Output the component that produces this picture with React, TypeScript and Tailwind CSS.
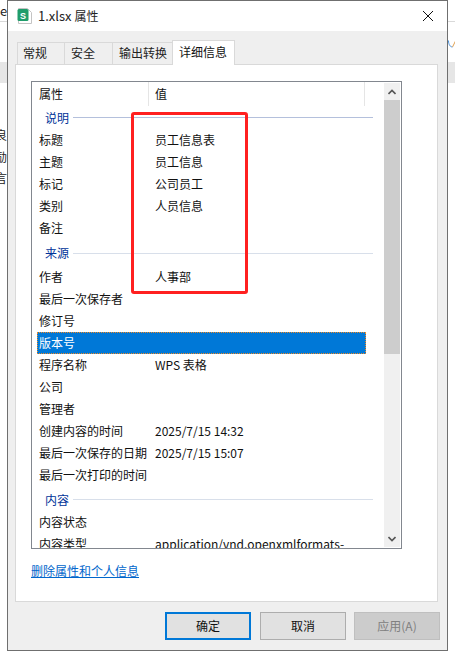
const font = { fontFamily: '"Noto Sans CJK SC", "Liberation Sans", sans-serif' };

type Row = { n: string; v?: string; sel?: boolean };

function Group({ title, box, line }: { title: string; box: string; line: string }) {
  return (
    <div className={box}>
      <span className="text-[12px] leading-none text-[#003399]">{title}</span>
      <div className={line} />
    </div>
  );
}

function Item({ n, v, sel }: Row) {
  return (
    <div
      className={
        sel
          ? "flex h-[22px] w-[329px] items-center border border-dotted border-[#f08a24] bg-[#0078d7] text-white"
          : "flex h-[22px] items-center border border-transparent text-[#111]"
      }
    >
      <span className="w-[117px] shrink-0 whitespace-nowrap pl-px">{n}</span>
      {v ? <span className="whitespace-nowrap">{v}</span> : null}
    </div>
  );
}

export default function App() {
  const a: Row[] = [
    { n: "标题", v: "员工信息表" },
    { n: "主题", v: "员工信息" },
    { n: "标记", v: "公司员工" },
    { n: "类别", v: "人员信息" },
    { n: "备注" },
  ];
  const b: Row[] = [
    { n: "作者", v: "人事部" },
    { n: "最后一次保存者" },
    { n: "修订号" },
    { n: "版本号", sel: true },
    { n: "程序名称", v: "WPS 表格" },
    { n: "公司" },
    { n: "管理者" },
    { n: "创建内容的时间", v: "2025/7/15 14:32" },
    { n: "最后一次保存的日期", v: "2025/7/15 15:07" },
    { n: "最后一次打印的时间" },
  ];
  const c: Row[] = [
    { n: "内容状态" },
    { n: "内容类型", v: "application/vnd.openxmlformats-" },
  ];

  return (
    <div style={font} className="relative h-[658px] w-[455px] overflow-hidden bg-white text-[12px]">
      {/* background application behind the dialog */}
      <div className="absolute left-0 top-[21px] h-px w-full bg-[#d9d9d9]" />
      <div className="absolute left-0 top-[62px] h-[21px] w-full bg-[#e6e6e6]" />
      <span className="absolute left-0 top-[1px] text-[13px] text-[#222]">e</span>
      <span className="absolute left-[-5px] top-[126px] text-[12px] text-[#222]">良</span>
      <span className="absolute left-[-5px] top-[148px] text-[12px] text-[#222]">励</span>
      <span className="absolute left-[-5px] top-[169px] text-[12px] text-[#222]">言</span>
      <svg width="8" height="10" viewBox="0 0 8 10" className="absolute left-[448px] top-[39px]">
        <path d="M0.5 1.5C0.5 6 2.5 8 4.5 8" stroke="#4a90d9" strokeWidth="1" fill="none" />
        <path d="M4.5 8L7.5 2" stroke="#e0a050" strokeWidth="1" fill="none" />
      </svg>

      {/* dialog window */}
      <div className="absolute left-[7px] top-0 flex h-[651px] w-[441px] flex-col border border-[#6f6f6f] bg-[#efefef]">
        <div className="flex h-[30px] items-center bg-white pl-[9px]">
          <svg width="16" height="18" viewBox="0 0 16 18" className="mr-[5px]">
            <path d="M1.5 1.5h9l4 4v11h-13z" fill="#fff" stroke="#c4c4c4" />
            <rect x="0.5" y="2" width="11" height="12" rx="1.5" fill="#1f9d6b" />
            <text x="6" y="11.5" textAnchor="middle" fontSize="9" fontWeight="700" fill="#fff" fontFamily="Liberation Sans">S</text>
          </svg>
          <span className="text-[12px] text-[#222]">
            <span className="text-[13px]">1.xlsx </span>属性
          </span>
          <svg width="12" height="12" viewBox="0 0 12 12" className="ml-auto mr-[13px]">
            <path d="M1 1l10 10M11 1L1 11" stroke="#111" strokeWidth="1" fill="none" />
          </svg>
        </div>

        {/* tabs */}
        <div className="flex h-[33px] items-end pl-[9px]">
          <div className="flex h-[22px] w-[48px] items-center border border-b-0 border-[#d9d9d9] bg-[#efefef] pb-[1px] pl-[5px] text-[#222]">常规</div>
          <div className="-ml-px flex h-[22px] w-[49px] items-center border border-b-0 border-[#d9d9d9] bg-[#efefef] pb-[1px] pl-[6px] text-[#222]">安全</div>
          <div className="-ml-px flex h-[22px] w-[61px] items-center border border-b-0 border-[#d9d9d9] bg-[#efefef] pb-[1px] pl-[6px] text-[#222]">输出转换</div>
          <div className="relative z-10 -ml-px mb-[-1px] flex h-[25px] w-[63px] items-center border border-b-0 border-[#d9d9d9] bg-white pb-[3px] pl-[6px] text-[#111]">详细信息</div>
        </div>

        {/* panel */}
        <div className="ml-[7px] flex h-[538px] w-[423px] flex-col border border-[#d9d9d9] bg-white pl-[15px] pt-[16px]">
          <div className="flex h-[468px] w-[371px] overflow-hidden border border-[#82878f] bg-white pl-[5px] pr-[1px]">
            <div className="relative w-[347px] shrink-0 overflow-hidden">
              <div className="flex h-[24px] items-center text-[#111]">
                <span className="w-[111px] shrink-0 pl-[2px]">属性</span>
                <span className="flex h-[24px] flex-1 items-center border-l border-[#e5e5e5] pl-[6px]">值</span>
                <span className="mr-[19px] h-[24px] w-px bg-[#e5e5e5]" />
              </div>
              <Group title="说明" box="flex h-[23px] items-center pl-[8px] pr-[11px]" line="ml-[4px] h-px flex-1 bg-[#b4c0dc]" />
              {a.map((r) => <Item key={r.n} {...r} />)}
              <Group title="来源" box="flex h-[27px] items-center pl-[8px] pr-[11px] pt-[1px]" line="ml-[4px] h-px flex-1 bg-[#d8dfea]" />
              {b.map((r) => <Item key={r.n} {...r} />)}
              <Group title="内容" box="flex h-[25px] items-center pl-[8px] pr-[11px] pt-[2px]" line="ml-[4px] h-px flex-1 bg-[#d8dfea]" />
              {c.map((r) => <Item key={r.n} {...r} />)}
            </div>
            <div className="ml-auto mt-[1px] flex h-[464px] w-[16px] flex-col bg-[#f0f0f0]">
              <div className="flex h-[17px] items-center justify-center">
                <svg width="8" height="6" viewBox="0 0 8 6"><path d="M.5 5L4 1.5 7.5 5" stroke="#555" strokeWidth="1.6" fill="none" /></svg>
              </div>
              <div className="h-[254px] bg-[#cdcdcd]" />
              <div className="flex-1" />
              <div className="flex h-[17px] items-center justify-center">
                <svg width="8" height="6" viewBox="0 0 8 6"><path d="M.5 1L4 4.5 7.5 1" stroke="#555" strokeWidth="1.6" fill="none" /></svg>
              </div>
            </div>
          </div>
          <a className="mt-[13px] w-fit text-[12px] leading-[18px] text-[#0066cc] underline">删除属性和个人信息</a>
        </div>

        {/* buttons */}
        <div className="flex justify-end pr-[7px] pt-[10px]">
          <div className="mr-[9px] flex h-[28px] w-[86px] items-center justify-center border-2 border-[#0078d7] bg-[#e1e1e1] text-[#111]">确定</div>
          <div className="mr-[8px] flex h-[28px] w-[86px] items-center justify-center border border-[#adadad] bg-[#e1e1e1] text-[#111]">取消</div>
          <div className="flex h-[28px] w-[86px] items-center justify-center border border-[#bfbfbf] bg-[#cccccc] text-[#808080]">应用(A)</div>
        </div>
      </div>

      {/* red annotation */}
      <div className="absolute left-[131px] top-[112px] h-[182px] w-[117px] rounded-[3px] border-[3px] border-[#ff2020]" />
    </div>
  );
}
